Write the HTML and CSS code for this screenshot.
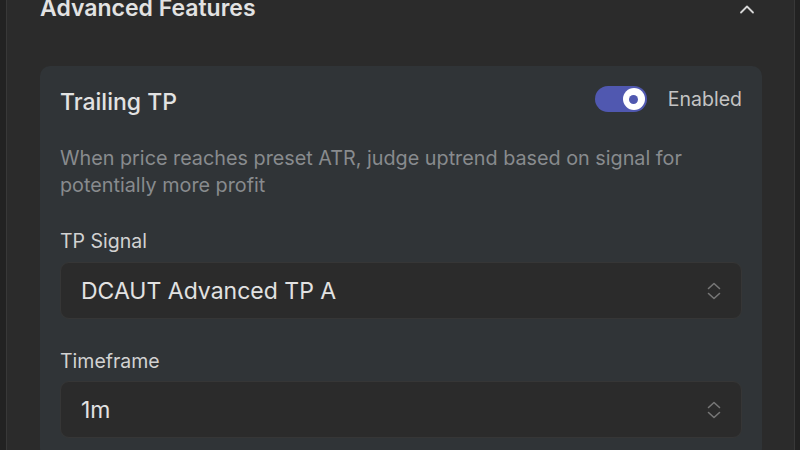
FILE: index.html
```html
<!DOCTYPE html>
<html>
<head>
<meta charset="utf-8">
<link rel="stylesheet" href="styles.css">
</head>
<body>
<div class="panel">
  <div class="section-head">
    <h2 class="section-title">Advanced Features</h2>
    <svg class="collapse-icon" width="16" height="16" viewBox="0 0 16 16"><path d="M2 10.5 L8 4.5 L14 10.5" fill="none" stroke="#d6d6d6" stroke-width="1.8" stroke-linecap="round" stroke-linejoin="round"/></svg>
  </div>
  <div class="card">
    <div class="card-head">
      <h3 class="card-title">Trailing TP</h3>
      <div class="toggle-wrap">
        <span class="toggle"><span class="knob"></span></span>
        <span class="toggle-label">Enabled</span>
      </div>
    </div>
    <p class="desc">When price reaches preset ATR, judge uptrend based on signal for potentially more profit</p>
    <div class="field">
      <label class="field-label">TP Signal</label>
      <div class="select">
        <span class="select-value">DCAUT Advanced TP A</span>
        <svg class="updown" width="14" height="18" viewBox="0 0 14 18"><path d="M1.5 6.5 L7 1.5 L12.5 6.5 M1.5 11.5 L7 16.5 L12.5 11.5" fill="none" stroke="#767676" stroke-width="1.6" stroke-linecap="round" stroke-linejoin="round"/></svg>
      </div>
    </div>
    <div class="field">
      <label class="field-label">Timeframe</label>
      <div class="select">
        <span class="select-value">1m</span>
        <svg class="updown" width="14" height="18" viewBox="0 0 14 18"><path d="M1.5 6.5 L7 1.5 L12.5 6.5 M1.5 11.5 L7 16.5 L12.5 11.5" fill="none" stroke="#767676" stroke-width="1.6" stroke-linecap="round" stroke-linejoin="round"/></svg>
      </div>
    </div>
  </div>
</div>
</body>
</html>
```
FILE: styles.css
```css
html, body {
  margin: 0;
  padding: 0;
  background: #222222;
  height: 100%;
  overflow: hidden;
  font-family: Inter, "Noto Sans", sans-serif;
}
.panel {
  margin-left: 6px;
  width: 789px;
  height: 450px;
  overflow: hidden;
  background: #2b2b2b;
  border-left: 1px solid #383838;
  border-right: 1px solid #383838;
  padding: 0 32px 0 33px;
  box-sizing: border-box;
}
.section-head {
  display: flex;
  align-items: center;
  justify-content: space-between;
  height: 20px;
}
.section-title {
  margin: -3px 0 0 0;
  font-size: 23px;
  line-height: 23px;
  font-weight: 600;
  color: #e2e2e2;
}
.collapse-icon {
  margin-right: 7px;
}
.card {
  margin-top: 46px;
  background: #303437;
  border-radius: 10px;
  padding: 20px 20px 20px 20px;
}
.card-head {
  display: flex;
  align-items: flex-start;
  justify-content: space-between;
  height: 26px;
}
.card-title {
  margin: 0;
  padding-top: 3px;
  font-size: 23px;
  font-weight: 500;
  color: #e2e2e2;
  line-height: 26px;
}
.toggle-wrap {
  display: flex;
  align-items: center;
  gap: 21px;
  height: 26px;
}
.toggle {
  width: 52px;
  height: 26px;
  border-radius: 13px;
  background: #5058b0;
  display: flex;
  align-items: center;
  justify-content: flex-end;
  padding: 0 2px;
  box-sizing: border-box;
}
.knob {
  width: 22px;
  height: 22px;
  border-radius: 50%;
  background: #ffffff;
  display: flex;
  align-items: center;
  justify-content: center;
}
.knob::after {
  content: "";
  width: 9px;
  height: 9px;
  border-radius: 50%;
  background: #5058b0;
}
.toggle-label {
  font-size: 19.5px;
  color: #c4c4c4;
}
.desc {
  margin: 33px 0 0 0;
  font-size: 19.8px;
  line-height: 27px;
  color: #888b8e;
}
.field {
  margin-top: 30px;
}
.field + .field {
  margin-top: 30px;
}
.field-label {
  display: block;
  font-size: 19.5px;
  line-height: 24px;
  color: #d2d2d2;
}
.select {
  margin-top: 9px;
  height: 57px;
  box-sizing: border-box;
  background: #2b2b2b;
  border: 1px solid #363636;
  border-radius: 9px;
  display: flex;
  align-items: center;
  justify-content: space-between;
  padding: 0 20px;
}
.field + .field .select {
  margin-top: 8px;
}
.select-value {
  font-size: 23px;
  color: #e2e2e2;
}
```
